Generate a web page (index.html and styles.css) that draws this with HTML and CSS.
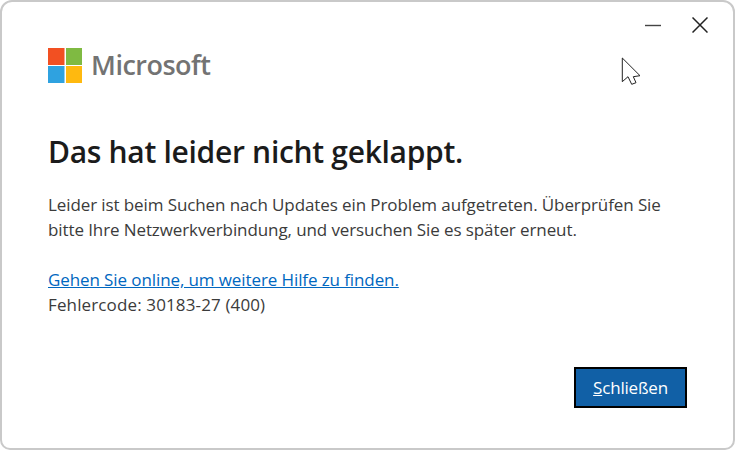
FILE: index.html
```html
<!DOCTYPE html>
<html lang="de">
<head>
<meta charset="utf-8">
<title>Microsoft</title>
<link rel="stylesheet" href="styles.css">
</head>
<body>
<div class="window">
  <div class="controls">
    <svg class="ctl" width="16" height="16" viewBox="0 0 16 16"><path d="M0 8.5H16" stroke="#444" stroke-width="1.4" fill="none"/></svg>
    <svg class="ctl" width="16" height="16" viewBox="0 0 16 16"><path d="M0.5 0.5L15.5 15.5M15.5 0.5L0.5 15.5" stroke="#222" stroke-width="1.5" fill="none"/></svg>
  </div>
  <div class="brand">
    <svg class="logo" width="34" height="35" viewBox="0 0 34 35">
      <rect x="0" y="0" width="16.5" height="17" fill="#f25022"/>
      <rect x="18" y="0" width="16" height="17" fill="#7fba42"/>
      <rect x="0" y="18" width="16.5" height="17" fill="#2fa2e0"/>
      <rect x="18" y="18" width="16" height="17" fill="#ffb90f"/>
    </svg>
    <span class="wordmark">Microsoft</span>
  </div>
  <h1 class="title">Das hat leider nicht geklappt.</h1>
  <p class="message">Leider ist beim Suchen nach Updates ein Problem aufgetreten. Überprüfen Sie<br>bitte Ihre Netzwerkverbindung, und versuchen Sie es später erneut.</p>
  <p class="details"><a class="help" href="#">Gehen Sie online, um weitere Hilfe zu finden.</a><br><span class="code">Fehlercode: 30183-27 (400)</span></p>
  <div class="actions"><button class="close"><u>S</u>chließen</button></div>
  <svg class="cursor" width="20" height="28" viewBox="0 0 20 28"><path d="M1.3 1V24.7L7 19.7L10.7 27.3L15 25.7L12.3 19.7L19 18.7Z" fill="#fff" stroke="#222" stroke-width="1"/></svg>
</div>
</body>
</html>
```
FILE: styles.css
```css
* { box-sizing: border-box; }
html, body { margin: 0; padding: 0; background: #fff; }
body { width: 735px; height: 450px; overflow: hidden; font-family: "Open Sans", "Noto Sans", sans-serif; }
.window {
  position: relative;
  width: 735px;
  height: 450px;
  background: #fff;
  border: 2px solid #c9c9c9;
  border-radius: 12px 12px 10px 10px;
  padding: 0 46px;
  display: flex;
  flex-direction: column;
}
.controls { display: flex; gap: 31px; height: 16px; position: absolute; top: 15px; right: 25px; }
.ctl { display: block; }
.brand { display: flex; align-items: center; gap: 9px; margin-top: 46px; height: 35px; }
.logo { display: block; flex: none; }
.wordmark { font-size: 27px; font-weight: 600; color: #737373; letter-spacing: -0.5px; line-height: 33px; padding-bottom: 2px; }
.title { margin: 49px 0 0; font-size: 30px; font-weight: 600; line-height: 40px; color: #1b1b1b; letter-spacing: -0.3px; }
.message { margin: 20px 0 0; font-size: 17px; line-height: 25px; color: #3b3b3b; letter-spacing: -0.1px; }
.details { margin: 25px 0 0; font-size: 17px; line-height: 25px; color: #3b3b3b; letter-spacing: -0.1px; }
.code { letter-spacing: 0.13px; }
.help { color: #0067c0; text-decoration: underline; }
.actions { display: flex; justify-content: flex-end; margin: 50px 0 0; }
.close {
  width: 113px;
  height: 41px;
  background: #1160a6;
  border: 2px solid #000;
  color: #fff;
  font-family: inherit;
  font-size: 17px;
  letter-spacing: -0.2px;
  padding: 0;
}
.cursor { position: absolute; left: 619px; top: 55px; }
```
